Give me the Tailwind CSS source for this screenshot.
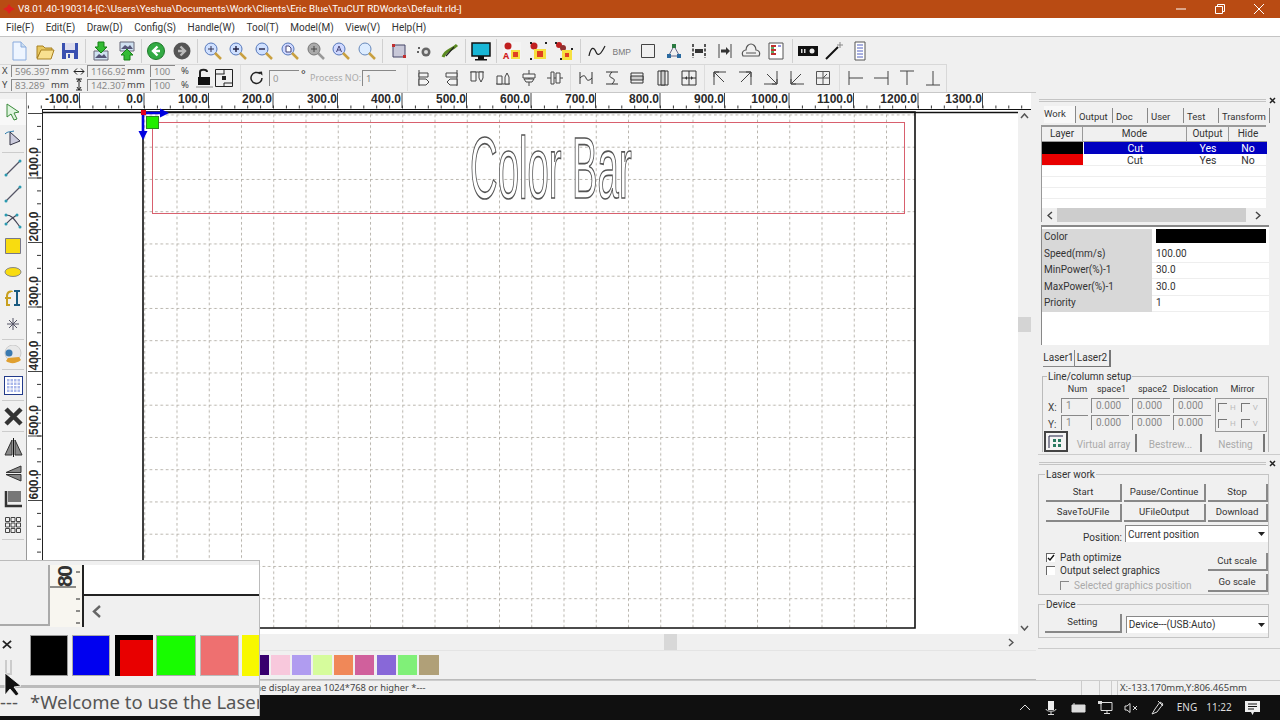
<!DOCTYPE html>
<html>
<head>
<meta charset="utf-8">
<script src="https://cdn.jsdelivr.net/npm/@tailwindcss/browser@4"></script>
</head>
<body class="m-0">
<div class="relative w-[1280px] h-[720px] overflow-hidden flex flex-col bg-[#f0f0f0] text-[#222] font-['Noto_Sans',sans-serif]">

<!-- title bar -->
<div class="h-[18px] shrink-0 bg-[#b94b13] flex items-center text-white text-[9.8px] font-['Roboto',sans-serif]">
  <svg class="w-[12px] h-[12px] ml-[3px] mr-[3px]" viewBox="0 0 12 12"><path d="M6 1 L8 4 L12 6 L8 8 L6 11 L4 8 L0 6 L4 4Z" fill="#e02020"/></svg>
  <span class="whitespace-nowrap pt-[1px]">V8.01.40-190314-[C:\Users\Yeshua\Documents\Work\Clients\Eric Blue\TruCUT RDWorks\Default.rld-]</span>
  <div class="ml-auto flex pr-[2px]">
    <div class="w-[39px] flex justify-center"><svg class="w-[10px] h-[10px]" viewBox="0 0 10 10"><path d="M0 5h10" stroke="#fff"/></svg></div>
    <div class="w-[39px] flex justify-center"><svg class="w-[10px] h-[10px]" viewBox="0 0 10 10"><path d="M.5 2.500h7v7h-7zM2.500 2.500v-2h7v7h-2" fill="none" stroke="#fff"/></svg></div>
    <div class="w-[39px] flex justify-center"><svg class="w-[10px] h-[10px]" viewBox="0 0 10 10"><path d="M0 0l10 10M10 0L0 10" stroke="#fff"/></svg></div>
  </div>
</div>

<!-- menu -->
<div class="h-[19px] shrink-0 bg-white flex items-center pl-[6px] pt-[1px] gap-[11.5px] text-[10px] text-[#333] border-b border-[#c4c4c4] font-['Roboto',sans-serif]">
  <span>File(F)</span><span>Edit(E)</span><span>Draw(D)</span><span>Config(S)</span><span>Handle(W)</span><span>Tool(T)</span><span>Model(M)</span><span>View(V)</span><span>Help(H)</span>
</div>

<!-- toolbar row 1 -->
<div class="h-[27px] shrink-0 flex items-center pl-[9px]">
  <div class="flex gap-[5.7px]">
    <svg class="w-[20px] h-[20px]" viewBox="0 0 20 20"><path d="M4 1h8l5 5v13H4z" fill="#eef5ff" stroke="#88aadd"/><path d="M12 1v5h5" fill="#cde" stroke="#88aadd"/></svg>
    <svg class="w-[20px] h-[20px]" viewBox="0 0 20 20"><path d="M2 5h6l2 2h7v3H6L2 17z" fill="#e8c860" stroke="#a88020"/><path d="M6 9h13l-3 9H2z" fill="#f8e090" stroke="#a88020"/></svg>
    <svg class="w-[20px] h-[20px]" viewBox="0 0 20 20"><path d="M2 2h16v16H2z" fill="#3a50b0"/><path d="M5 2h10v7H5z" fill="#dde"/><path d="M6 12h8v6H6z" fill="#eee"/><path d="M8 13h2v4H8z" fill="#3a50b0"/></svg>
  </div>
  <i class="w-px h-[24px] bg-[#d0d0d0] mx-[5px]"></i>
  <div class="flex gap-[5.7px]">
    <svg class="w-[20px] h-[20px]" viewBox="0 0 20 20"><path d="M3 10h14v9H3z" fill="#cfe0f0" stroke="#667"/><path d="M4 17l4-4 3 2 2-2 3 4z" fill="#557"/><path d="M7 1h6v5h3l-6 6-6-6h3z" fill="#33bb33" stroke="#178017"/></svg>
    <svg class="w-[20px] h-[20px]" viewBox="0 0 20 20"><path d="M3 1h14v9H3z" fill="#cfe0f0" stroke="#667"/><path d="M4 8l4-4 3 2 2-2 3 4z" fill="#557"/><path d="M7 19v-5H4l6-6 6 6h-3v5z" fill="#33bb33" stroke="#178017"/></svg>
  </div>
  <i class="w-px h-[24px] bg-[#d0d0d0] mx-[4px]"></i>
  <div class="flex gap-[5.7px]">
    <svg class="w-[20px] h-[20px]" viewBox="0 0 20 20"><circle cx="10" cy="10" r="8.5" fill="#33aa44" stroke="#1f7a2a"/><path d="M11.500 5.500L7 10l4.500 4.500M7 10h7" fill="none" stroke="#fff" stroke-width="2.400"/></svg>
    <svg class="w-[20px] h-[20px]" viewBox="0 0 20 20"><circle cx="10" cy="10" r="8.500" fill="#555"/><path d="M8.500 5.500L13 10l-4.500 4.500M13 10H6" fill="none" stroke="#bbb" stroke-width="2.400"/></svg>
  </div>
  <i class="w-px h-[24px] bg-[#d0d0d0] mx-[5px]"></i>
  <div class="flex gap-[5.7px]">
    <svg class="w-[20px] h-[20px]" viewBox="0 0 20 20"><circle cx="8" cy="8" r="6" fill="#cfe0ff" stroke="#5577bb"/><path d="M8 5v6M5 8h6" stroke="#335"/><path d="M12 12l6 6" stroke="#c9a040" stroke-width="2.500"/></svg>
    <svg class="w-[20px] h-[20px]" viewBox="0 0 20 20"><circle cx="8" cy="8" r="6" fill="#cfe0ff" stroke="#5577bb"/><path d="M8 5v6M5 8h6" stroke="#224" stroke-width="1.400"/><path d="M12 12l6 6" stroke="#c9a040" stroke-width="2.500"/></svg>
    <svg class="w-[20px] h-[20px]" viewBox="0 0 20 20"><circle cx="8" cy="8" r="6" fill="#cfe0ff" stroke="#5577bb"/><path d="M5 8h6" stroke="#224" stroke-width="1.400"/><path d="M12 12l6 6" stroke="#c9a040" stroke-width="2.500"/></svg>
    <svg class="w-[20px] h-[20px]" viewBox="0 0 20 20"><circle cx="8" cy="8" r="6" fill="#cfd8ff" stroke="#5577bb"/><path d="M6 5h3l2 2v4H6z" fill="#fff" stroke="#447"/><path d="M12 12l6 6" stroke="#c9a040" stroke-width="2.500"/></svg>
    <svg class="w-[20px] h-[20px]" viewBox="0 0 20 20"><circle cx="8" cy="8" r="6" fill="#aaa" stroke="#777"/><path d="M8 5v6M5 8h6" stroke="#444"/><path d="M12 12l6 6" stroke="#999" stroke-width="2.500"/></svg>
    <svg class="w-[20px] h-[20px]" viewBox="0 0 20 20"><circle cx="8" cy="8" r="6" fill="#cfd8ff" stroke="#5577bb"/><path d="M5.500 11L8 5l2.500 6M6.500 9h3" fill="none" stroke="#447"/><path d="M12 12l6 6" stroke="#c9a040" stroke-width="2.500"/></svg>
    <svg class="w-[20px] h-[20px]" viewBox="0 0 20 20"><circle cx="8" cy="8" r="6" fill="#dcecff" stroke="#6688bb"/><path d="M12 12l6 6" stroke="#c9a040" stroke-width="2.500"/></svg>
  </div>
  <i class="w-px h-[24px] bg-[#d0d0d0] mx-[5.500px]"></i>
  <div class="flex gap-[5.7px]">
    <svg class="w-[20px] h-[20px]" viewBox="0 0 20 20"><path d="M4 4h12v12H4z" fill="#c8c8d8" stroke="#446"/><path d="M3 3h3v3H3zM14 14h3v3h-3z" fill="#c03030"/></svg>
    <svg class="w-[20px] h-[20px]" viewBox="0 0 20 20"><circle cx="11" cy="11" r="4.500" fill="#666"/><circle cx="11" cy="11" r="2" fill="#ddd"/><path d="M3 7h2M2 11h2" stroke="#333" stroke-width="1.500"/></svg>
    <svg class="w-[20px] h-[20px]" viewBox="0 0 20 20"><path d="M3 16C6 8 11 10 17 4" fill="none" stroke="#5a8a20" stroke-width="3"/><path d="M6 15l8-9" stroke="#222" stroke-width="1.200"/></svg>
  </div>
  <i class="w-px h-[24px] bg-[#d0d0d0] mx-[5px]"></i>
  <svg class="w-[20px] h-[20px]" viewBox="0 0 20 20"><path d="M1 2h18v13H1z" fill="#18b6d6" stroke="#111" stroke-width="1.500"/><path d="M7 15h6v3h3v1.500H4V18h3z" fill="#111"/></svg>
  <i class="w-px h-[24px] bg-[#d0d0d0] mx-[5px]"></i>
  <div class="flex gap-[5.7px]">
    <svg class="w-[20px] h-[20px]" viewBox="0 0 20 20"><rect x="1" y="1" width="18" height="18" fill="#f4f4f4"/><circle cx="6" cy="5" r="3.500" fill="#c02020"/><path d="M9 9h9v9H9z" fill="#f6e040"/><path d="M11 11h5v5h-5z" fill="#e04020"/><text x="1" y="18" font-size="9" fill="#d02020" font-weight="700">A</text></svg>
    <svg class="w-[20px] h-[20px]" viewBox="0 0 20 20"><circle cx="6" cy="5" r="3.500" fill="#c02020"/><path d="M6 8h12v10H6z" fill="#f6e040"/><path d="M9 10h6v6H9z" fill="#e04020"/><path d="M2 1h2v2H2zM17 1h2v2h-2zM2 17h2v2H2z" fill="#222"/></svg>
    <svg class="w-[20px] h-[20px]" viewBox="0 0 20 20"><circle cx="5" cy="4" r="3" fill="#c02020"/><circle cx="9" cy="7" r="3" fill="#903030"/><path d="M8 9h10v10H8z" fill="#f6e040"/><path d="M11 12h4v4h-4z" fill="#e04020"/><path d="M1 1h2v2H1zM17 7h2v2h-2zM6 17h2v2H6z" fill="#222"/></svg>
  </div>
  <i class="w-px h-[24px] bg-[#d0d0d0] mx-[6px]"></i>
  <div class="flex gap-[5.7px]">
    <svg class="w-[20px] h-[20px]" viewBox="0 0 20 20"><path d="M2 15C4 5 7 6 9 11s5 2 9-6" fill="none" stroke="#222" stroke-width="1.200"/></svg>
    <svg class="w-[20px] h-[20px]" viewBox="0 0 20 20"><text x="0.500" y="14" font-size="8.500" fill="#777" font-family="Liberation Sans">BMP</text></svg>
    <svg class="w-[20px] h-[20px]" viewBox="0 0 20 20"><path d="M3.500 3.500h13v13h-13z" fill="none" stroke="#444"/></svg>
    <svg class="w-[20px] h-[20px]" viewBox="0 0 20 20"><path d="M10 5L5 14M10 5l5 9M5 15h10" stroke="#668" fill="none"/><path d="M8 3h4v4H8z" fill="#2a7a40"/><path d="M3 13h4v4H3zM13 13h4v4h-4z" fill="#2a6aa0"/></svg>
    <svg class="w-[20px] h-[20px]" viewBox="0 0 20 20"><path d="M4 3v14M16 3v14" stroke="#222" stroke-width="1.500" stroke-dasharray="3 1.500"/><path d="M6 8h8v4H6z" fill="#333"/></svg>
    <svg class="w-[20px] h-[20px]" viewBox="0 0 20 20"><path d="M4 3v14M16 3v14" stroke="#444"/><path d="M6 10h6" stroke="#333" stroke-width="3"/><path d="M11 6l4 4-4 4z" fill="#333"/></svg>
    <svg class="w-[20px] h-[20px]" viewBox="0 0 20 20"><path d="M2 15c-2-4 1-6 3-6 0-4 3-6 5-6s5 2 5 6c2 0 5 2 3 6zM5 12h10" fill="none" stroke="#555" stroke-width="1.200"/></svg>
    <svg class="w-[20px] h-[20px]" viewBox="0 0 20 20"><path d="M3 2h14v16H3z" fill="#fff" stroke="#555"/><path d="M5 5h5M5 9h5M5 13h5" stroke="#c03030" stroke-width="2"/><path d="M5 7h3M5 11h3" stroke="#2a8a30" stroke-width="1.500"/><path d="M12 5h3" stroke="#3030c0"/></svg>
  </div>
  <i class="w-px h-[24px] bg-[#d0d0d0] mx-[5.500px]"></i>
  <div class="flex gap-[5.7px]">
    <svg class="w-[20px] h-[20px]" viewBox="0 0 20 20"><path d="M0 5h20v10H0z" fill="#111"/><path d="M3 8h1.500v4H3zM6 8h1.500v4H6z" fill="#ddd"/><circle cx="14" cy="10" r="2.500" fill="#eee"/></svg>
    <svg class="w-[20px] h-[20px]" viewBox="0 0 20 20"><path d="M2 18L14 6" stroke="#111" stroke-width="2"/><path d="M16 1v6M13 4h6" stroke="#888"/></svg>
    <svg class="w-[20px] h-[20px]" viewBox="0 0 20 20"><path d="M5 1h10v18H5z" fill="#fff" stroke="#555"/><path d="M7 4h6M7 7h6M7 10h6M7 13h6M7 16h6" stroke="#5060c0"/></svg>
  </div>
</div>

<!-- toolbar row 2 -->
<div class="h-[28px] shrink-0 flex text-[9.5px]">
  <div class="w-[946px] shrink-0 border-t border-[#d8d8d8] bg-[#f0f0f0] flex items-center pb-[2px]">
    <div class="w-[11px] pl-[2px] flex flex-col gap-[3px] leading-[11px] text-[#444]"><span>X</span><span>Y</span></div>
    <div class="w-[62px] flex flex-col gap-[2px]">
      <div class="flex items-center"><span class="w-[38px] h-[12px] border-t border-l border-[#888] bg-[#efefef] text-[#888] pl-[3px] leading-[11px] overflow-hidden whitespace-nowrap">596.397</span><span class="ml-[2px] text-[#444] leading-[11px]">mm</span></div>
      <div class="flex items-center"><span class="w-[38px] h-[12px] border-t border-l border-[#888] bg-[#efefef] text-[#888] pl-[3px] leading-[11px] overflow-hidden whitespace-nowrap">83.289</span><span class="ml-[2px] text-[#444] leading-[11px]">mm</span></div>
    </div>
    <div class="w-[14px] flex flex-col">
      <svg class="w-[12px] h-[13px]" viewBox="0 0 12 13"><path d="M1 6.500h10M1 6.500l3-3M1 6.500l3 3M11 6.500l-3-3M11 6.500l-3 3" fill="none" stroke="#222"/></svg>
      <svg class="w-[12px] h-[13px]" viewBox="0 0 12 13"><path d="M6 1v11M3 1h6M3 12h6M6 1L4 4M6 1l2 3M6 12l-2-3M6 12l2-3" fill="none" stroke="#222"/></svg>
    </div>
    <div class="w-[63px] flex flex-col gap-[2px]">
      <div class="flex items-center"><span class="w-[38px] h-[12px] border-t border-l border-[#888] bg-[#efefef] text-[#888] pl-[3px] leading-[11px] overflow-hidden whitespace-nowrap">1166.92</span><span class="ml-[2px] text-[#444] leading-[11px]">mm</span></div>
      <div class="flex items-center"><span class="w-[38px] h-[12px] border-t border-l border-[#888] bg-[#efefef] text-[#888] pl-[3px] leading-[11px] overflow-hidden whitespace-nowrap">142.307</span><span class="ml-[2px] text-[#444] leading-[11px]">mm</span></div>
    </div>
    <div class="w-[46px] flex flex-col gap-[2px]">
      <div class="flex items-center"><span class="w-[25px] h-[12px] border-t border-l border-[#888] text-[#888] pl-[3px] leading-[11px]">100</span><span class="ml-[6px] text-[#444] leading-[11px]">%</span></div>
      <div class="flex items-center"><span class="w-[25px] h-[12px] border-t border-l border-[#888] text-[#888] pl-[3px] leading-[11px]">100</span><span class="ml-[6px] text-[#444] leading-[11px]">%</span></div>
    </div>
    <div class="flex gap-[2px] items-center">
      <svg class="w-[17px] h-[20px]" viewBox="0 0 17 20"><path d="M4 9V4c0-3 7-3 7 0" fill="none" stroke="#222" stroke-width="2"/><path d="M2 9h12v8H2z" fill="#111"/><path d="M0 19h17" stroke="#888"/></svg>
      <svg class="w-[18px] h-[18px]" viewBox="0 0 18 18"><path d="M.5.500h17v17H.5zM.5 5h9M9 .500V5M9 18v-4h8" fill="none" stroke="#222"/><path d="M7 7h4v4H7z" fill="#222"/></svg>
    </div>
    <i class="w-px h-[26px] bg-[#ddd] ml-[7px] mr-[8px]"></i>
    <svg class="w-[16px] h-[16px]" viewBox="0 0 16 16"><path d="M13 8a5.500 5.500 0 1 1-2-4.300" fill="none" stroke="#222" stroke-width="1.500"/><path d="M9 2l4-.500.500 4z" fill="#222"/></svg>
    <span class="w-[30px] h-[16px] ml-[4px] border-t border-l border-[#888] text-[#999] pl-[3px] leading-[15px]">0</span>
    <span class="ml-[2px] w-[9px] text-[#333] text-[11px] -mt-[6px]">°</span>
    <span class="w-[52px] text-[#aaa] text-[9px] whitespace-nowrap">Process NO:</span>
    <span class="w-[34px] h-[16px] border-t border-l border-[#888] text-[#888] pl-[3px] leading-[15px]">1</span>
    <i class="w-px h-[26px] bg-[#ddd] ml-[11px] mr-[7px]"></i>
    <div class="flex gap-[6px]">
      <svg class="w-[20px] h-[20px]" viewBox="0 0 20 20"><path d="M4 2v16" stroke="#444"/><path d="M4 5h9v4H4zM4 11h7l3 3-3 3H4z" fill="#f4f4f4" stroke="#444"/></svg>
      <svg class="w-[20px] h-[20px]" viewBox="0 0 20 20"><path d="M16 2v16" stroke="#444"/><path d="M5 5h11v4H5zM9 11h7v6H9l-3-3z" fill="#f4f4f4" stroke="#444"/></svg>
      <svg class="w-[20px] h-[20px]" viewBox="0 0 20 20"><path d="M3 4h14" stroke="#444"/><path d="M4 4h5v9H4zM12 4h4v6l-2 4-2-4z" fill="#f4f4f4" stroke="#444"/></svg>
      <svg class="w-[20px] h-[20px]" viewBox="0 0 20 20"><path d="M3 16h14" stroke="#444"/><path d="M4 8h5v8H4zM12 16V9l2-4 2 4v7z" fill="#f4f4f4" stroke="#444"/></svg>
      <svg class="w-[20px] h-[20px]" viewBox="0 0 20 20"><path d="M10 2v16" stroke="#444"/><path d="M4 6h12v4H4zM5 11h10l-2 3h-6z" fill="#f4f4f4" stroke="#444"/></svg>
      <svg class="w-[20px] h-[20px]" viewBox="0 0 20 20"><path d="M2 10h16" stroke="#444"/><path d="M6 4h3v12H6zM11 5h4v10h-4z" fill="#f4f4f4" stroke="#444"/></svg>
    </div>
    <i class="w-px h-[26px] bg-[#ddd] mx-[5px]"></i>
    <div class="flex gap-[5.700px]">
      <svg class="w-[20px] h-[20px]" viewBox="0 0 20 20"><path d="M4 4v12M16 4v12M4 10c3-3 5-3 6 0s3 3 6 0" fill="none" stroke="#333"/></svg>
      <svg class="w-[20px] h-[20px]" viewBox="0 0 20 20"><path d="M4 4h12M4 16h12M10 4c-3 3-3 5 0 6s3 3 0 6" fill="none" stroke="#333"/></svg>
      <svg class="w-[20px] h-[20px]" viewBox="0 0 20 20"><path d="M4 5h12v10H4z" fill="none" stroke="#333"/><path d="M4 8h12v4H4z" fill="#ccc" stroke="#333"/></svg>
      <svg class="w-[20px] h-[20px]" viewBox="0 0 20 20"><path d="M5 3h10v14H5z" fill="none" stroke="#333"/><path d="M8 3h4v14H8z" fill="#ccc" stroke="#333"/></svg>
      <svg class="w-[20px] h-[20px]" viewBox="0 0 20 20"><path d="M3 3h14v14H3zM3 10h14M10 3v14" fill="none" stroke="#333"/><path d="M6 10l2-2v4zM14 10l-2-2v4z" fill="#333"/></svg>
    </div>
    <i class="w-px h-[26px] bg-[#ddd] mx-[5px]"></i>
    <div class="flex gap-[5.700px]">
      <svg class="w-[20px] h-[20px]" viewBox="0 0 20 20"><path d="M4 17V4h12M4 4l10 10M4 4h5M4 4v5" fill="none" stroke="#444"/></svg>
      <svg class="w-[20px] h-[20px]" viewBox="0 0 20 20"><path d="M4 4h12v13M16 4L6 14M16 4h-5M16 4v5" fill="none" stroke="#444"/></svg>
      <svg class="w-[20px] h-[20px]" viewBox="0 0 20 20"><path d="M16 3v13H3M16 16L6 6M16 16h-5M16 16v-5" fill="none" stroke="#444"/></svg>
      <svg class="w-[20px] h-[20px]" viewBox="0 0 20 20"><path d="M4 3v13h13M4 16L14 6M4 16h5M4 16v-5" fill="none" stroke="#444"/></svg>
      <svg class="w-[20px] h-[20px]" viewBox="0 0 20 20"><path d="M3.500 3.500h13v13h-13zM3.500 10h13M10 3.500v13M14 6l-4 4" fill="none" stroke="#555"/></svg>
    </div>
    <i class="w-px h-[26px] bg-[#ddd] mx-[6px]"></i>
    <div class="flex gap-[5.700px]">
      <svg class="w-[20px] h-[20px]" viewBox="0 0 20 20"><path d="M3 3v14M3 10h14" fill="none" stroke="#444"/></svg>
      <svg class="w-[20px] h-[20px]" viewBox="0 0 20 20"><path d="M17 3v14M3 10h14" fill="none" stroke="#444"/></svg>
      <svg class="w-[20px] h-[20px]" viewBox="0 0 20 20"><path d="M3 3h14M10 3v14" fill="none" stroke="#444"/></svg>
      <svg class="w-[20px] h-[20px]" viewBox="0 0 20 20"><path d="M3 17h14M10 3v14" fill="none" stroke="#444"/></svg>
    </div>
  </div>
  <div class="flex-1 border-l border-[#d8d8d8]"></div>
</div>

<!-- middle -->
<div class="flex-1 min-h-0 flex">
  <div class="w-[1036px] shrink-0 flex flex-col">
    <!-- top ruler -->
    <div class="h-[18px] shrink-0 flex border-t border-[#c8c8c8]">
      <div class="w-[27px] shrink-0"></div>
      <svg class="w-[1004px] h-[17px] bg-white" viewBox="0 0 1004 17" font-size="12" font-weight="700" fill="#2a2a2a" font-family="Liberation Sans">
        <defs><pattern id="tk" patternUnits="userSpaceOnUse" x="0.900" y="0" width="12.900" height="17"><path d="M.5 12.500v3" stroke="#333"/></pattern></defs>
        <rect width="1004" height="17" fill="url(#tk)"/>
        <path d="M52.500 0v15M117 0v15M181.500 0v15M246 0v15M310.500 0v15M375 0v15M439.500 0v15M504 0v15M568.500 0v15M633 0v15M697.500 0v15M762 0v15M826.500 0v15M891 0v15M955.500 0v15" stroke="#444"/>
        <path d="M15 16.500h989" stroke="#111"/>
        <g text-anchor="end">
          <text x="52" y="10">-100.0</text><text x="116" y="10">0.0</text><text x="181" y="10">100.0</text><text x="245" y="10">200.0</text><text x="310" y="10">300.0</text><text x="374" y="10">400.0</text><text x="439" y="10">500.0</text><text x="503" y="10">600.0</text><text x="568" y="10">700.0</text><text x="632" y="10">800.0</text><text x="697" y="10">900.0</text><text x="761" y="10">1000.0</text><text x="826" y="10">1100.0</text><text x="890" y="10">1200.0</text><text x="955" y="10">1300.0</text>
        </g>
      </svg>
      <div class="w-[5px] shrink-0"></div>
    </div>
    <!-- work row -->
    <div class="flex-1 min-h-0 flex">
      <!-- left tools -->
      <div class="w-[27px] shrink-0 -mt-[18px] pt-[7px] flex flex-col items-stretch border-r border-[#999] h-[470px]">
        <div class="h-[26px] bg-[#f8f8f8] flex items-center justify-center"><svg class="w-[18px] h-[18px]" viewBox="0 0 18 18"><path d="M3 1l12 8-5 1 3 6-3 1-3-6-4 3z" fill="#dff5df" stroke="#3a8a3a"/></svg></div>
        <div class="h-[26px] flex items-center justify-center"><svg class="w-[18px] h-[18px]" viewBox="0 0 18 18"><path d="M6 3l10 9-10 4z" fill="#ccd" stroke="#334"/><path d="M1 5c3-3 6-2 9-3" fill="none" stroke="#27a"/></svg></div>
        <i class="h-px bg-[#ccc] mx-[2px] mt-[1px] mb-[2px]"></i>
        <div class="h-[26px] flex items-center justify-center"><svg class="w-[18px] h-[18px]" viewBox="0 0 18 18"><path d="M2 16L16 2" stroke="#556" stroke-width="1.200"/><circle cx="2" cy="16" r="1.500" fill="#2a9ab0"/><circle cx="16" cy="2" r="1.500" fill="#2a9ab0"/></svg></div>
        <div class="h-[26px] flex items-center justify-center"><svg class="w-[18px] h-[18px]" viewBox="0 0 18 18"><path d="M2 16L16 2" stroke="#556" stroke-width="1.200"/><circle cx="2" cy="16" r="1.500" fill="#2a9ab0"/><circle cx="16" cy="2" r="1.500" fill="#2a9ab0"/></svg></div>
        <div class="h-[26px] flex items-center justify-center"><svg class="w-[18px] h-[18px]" viewBox="0 0 18 18"><path d="M2 4c6 0 8 4 14 12M2 13C6 8 10 6 13 4" fill="none" stroke="#445" stroke-width="1.200"/><circle cx="2" cy="4" r="1.500" fill="#2a9ab0"/><circle cx="16" cy="16" r="1.500" fill="#2a9ab0"/><circle cx="2" cy="13" r="1.500" fill="#2a9ab0"/><circle cx="13" cy="4" r="1.500" fill="#2a9ab0"/></svg></div>
        <div class="h-[26px] flex items-center justify-center"><svg class="w-[18px] h-[18px]" viewBox="0 0 18 18"><path d="M1.500 1.500h15v15h-15z" fill="#f8dc10" stroke="#778"/></svg></div>
        <div class="h-[26px] flex items-center justify-center"><svg class="w-[18px] h-[18px]" viewBox="0 0 18 18"><ellipse cx="9" cy="9" rx="8" ry="4.500" fill="#f8dc10" stroke="#888"/></svg></div>
        <div class="h-[26px] flex items-center justify-center"><svg class="w-[18px] h-[18px]" viewBox="0 0 18 18"><path d="M3 16V7c0-5 5-5 5-4M1 9h6M2 16h4" fill="none" stroke="#c8a020" stroke-width="2"/><path d="M13 2v14M10 2h6M10 16h6" fill="none" stroke="#1a5a80" stroke-width="2"/></svg></div>
        <div class="h-[26px] flex items-center justify-center"><svg class="w-[18px] h-[18px]" viewBox="0 0 18 18"><path d="M9 3v12M3 9h12M5 5l8 8M13 5l-8 8" stroke="#556"/></svg></div>
        <i class="h-px bg-[#ccc] mx-[2px] mb-[2px] mt-[2px]"></i>
        <div class="h-[26px] flex items-center justify-center"><svg class="w-[20px] h-[20px]" viewBox="0 0 20 20"><circle cx="10" cy="8" r="8" fill="#e8e8e8" stroke="#ccc"/><path d="M3 16c4 3 10 3 15-1l-2-3-11 1z" fill="#e0a030"/><circle cx="6" cy="8" r="3.500" fill="#3a7ab0"/></svg></div>
        <i class="h-px bg-[#ccc] mx-[2px] mt-[1px] mb-[2px]"></i>
        <div class="h-[26px] flex items-center justify-center"><svg class="w-[19px] h-[19px]" viewBox="0 0 19 19"><rect x=".5" y=".5" width="18" height="18" fill="#fff" stroke="#223a8a"/><path d="M3 3h13v13H3z" fill="#aab8ea"/><path d="M6 3v13M9.500 3v13M13 3v13M3 6h13M3 9.500h13M3 13h13" stroke="#fff"/></svg></div>
        <i class="h-px bg-[#ccc] mx-[2px] my-[2px]"></i>
        <div class="h-[26px] flex items-center justify-center"><svg class="w-[19px] h-[19px]" viewBox="0 0 19 19"><path d="M2 2l15 15M17 2L2 17" stroke="#333" stroke-width="4.500"/></svg></div>
        <i class="h-px bg-[#ccc] mx-[2px] my-[2px]"></i>
        <div class="h-[26px] flex items-center justify-center"><svg class="w-[19px] h-[19px]" viewBox="0 0 19 19"><path d="M8 2v15H1zM11 2v15h7z" fill="#888" stroke="#333"/><path d="M9.500 0v19" stroke="#111"/></svg></div>
        <div class="h-[26px] flex items-center justify-center"><svg class="w-[19px] h-[19px]" viewBox="0 0 19 19"><path d="M17 8.500H2L17 2zM17 10.500H2L17 17z" fill="#888" stroke="#333"/></svg></div>
        <div class="h-[26px] flex items-center justify-center"><svg class="w-[19px] h-[19px]" viewBox="0 0 19 19"><path d="M4 1h13v11H4z" fill="#777"/><path d="M2 1v15h16" fill="none" stroke="#333" stroke-width="2.500"/></svg></div>
        <div class="h-[26px] flex items-center justify-center"><svg class="w-[18px] h-[18px]" viewBox="0 0 18 18" fill="none" stroke="#444"><path d="M1.500 1.500h4v4h-4zM7 1.500h4v4H7zM12.500 1.500h4v4h-4zM1.500 7h4v4h-4zM7 7h4v4H7zM12.500 7h4v4h-4zM1.500 12.500h4v4h-4zM7 12.500h4v4H7zM12.500 12.500h4v4h-4z"/></svg></div>
        <i class="h-px bg-[#ccc] mx-[2px] mt-[1px]"></i>
      </div>
      <!-- vertical ruler -->
      <svg class="w-[15px] h-[524px] shrink-0 bg-white" viewBox="0 0 15 524" font-size="12" font-weight="700" fill="#2a2a2a" font-family="Liberation Sans">
        <defs><pattern id="tv" patternUnits="userSpaceOnUse" x="0" y="3" width="15" height="12.900"><path d="M10 .5h4" stroke="#333"/></pattern></defs>
        <rect width="15" height="524" fill="url(#tv)"/>
        <path d="M1 3.500h14M1 68h14M1 132.500h14M1 197h14M1 261.500h14M1 326h14M1 390.500h14M1 455h14" stroke="#444"/>
        <text transform="translate(11,67) rotate(-90)">100.0</text><text transform="translate(11,131.500) rotate(-90)">200.0</text><text transform="translate(11,196) rotate(-90)">300.0</text><text transform="translate(11,260.500) rotate(-90)">400.0</text><text transform="translate(11,325) rotate(-90)">500.0</text><text transform="translate(11,389.500) rotate(-90)">600.0</text>
      </svg>
      <div class="w-px h-full bg-[#222] shrink-0"></div>
      <!-- canvas -->
      <svg class="w-[975px] h-[524px] shrink-0 bg-white overflow-visible" viewBox="0 0 975 524" font-family="Liberation Sans">
        <defs>
          <pattern id="gr" patternUnits="userSpaceOnUse" x="101.250" y="4.450" width="32.250" height="32.250"><path d="M.5 0v32.250M0 .5h32.250" stroke="#b8b4ac" stroke-dasharray="2.700 2.675" fill="none"/></pattern>
        </defs>
        <rect x="100" y="2" width="772" height="516" fill="url(#gr)"/>
        <path d="M0 2.500h975" stroke="#111" stroke-width="1.500"/>
        <path d="M100 2h772v516H100z" fill="none" stroke="#111" stroke-width="1.600"/>
        <rect x="109.500" y="12.500" width="752" height="91" fill="none" stroke="#d8606e"/>
        <text transform="translate(427,88) scale(.435,1)" font-size="88" fill="#fff" stroke="#555" stroke-width="1.700">Color Bar</text>
        <rect x="103.500" y="6.500" width="12" height="12" fill="#22ee00" stroke="#2a8a20"/>
        <path d="M100 3v22M100 3h20" stroke="#0000e0" stroke-width="2.600"/>
        <path d="M126 3l-9-4.500v9zM100 30l-4.500-9h9z" fill="#0000e0"/>
        <rect x="98" y="0" width="5" height="5" fill="#e00020"/>
      </svg>
      <!-- vertical scrollbar -->
      <div class="w-[13px] shrink-0 h-[524px] bg-[#f0f0f0] flex flex-col items-center">
        <svg class="w-[9px] h-[6px] mt-[3px]" viewBox="0 0 9 6"><path d="M1 5l3.500-4L8 5" fill="none" stroke="#555" stroke-width="1.500"/></svg>
        <div class="w-full h-[15px] mt-[198px] bg-[#d4d4d4]"></div>
        <svg class="w-[9px] h-[6px] mt-auto mb-[3px]" viewBox="0 0 9 6"><path d="M1 1l3.500 4L8 1" fill="none" stroke="#555" stroke-width="1.500"/></svg>
      </div>
    </div>
    <!-- horizontal scrollbar -->
    <div class="h-[17px] shrink-0 flex items-center pl-[664px] pr-[22px] border-b border-[#e4e4e4]">
      <div class="w-[13px] h-full bg-[#d8d8d8]"></div>
      <svg class="w-[6px] h-[9px] ml-auto" viewBox="0 0 6 9"><path d="M1 1l4 3.500L1 8" fill="none" stroke="#555" stroke-width="1.500"/></svg>
    </div>
    <!-- colour bar -->
    <div class="h-[29px] shrink-0 flex items-start pt-[4px] pl-[260px] gap-[2.100px] border-b border-[#bbb]">
      <i class="w-[9px] h-[20px] bg-[#38006e]"></i><i class="w-[19px] h-[20px] bg-[#f8c8dc]"></i><i class="w-[19px] h-[20px] bg-[#b09cf0]"></i><i class="w-[19px] h-[20px] bg-[#d6fc9c]"></i><i class="w-[19px] h-[20px] bg-[#f08858]"></i><i class="w-[19px] h-[20px] bg-[#d0609c]"></i><i class="w-[19px] h-[20px] bg-[#8868d8]"></i><i class="w-[19px] h-[20px] bg-[#80f078]"></i><i class="w-[20px] h-[20px] bg-[#b0a078]"></i>
    </div>
  </div>

  <!-- right panel -->
  <div class="flex-1 min-w-0 text-[10px] leading-[11px] text-[#333] pt-[5px] pl-[2px] font-['Roboto',sans-serif]">
    <div class="flex items-center h-[6px] pr-[4px] pl-[1px]">
      <div class="flex-1 h-[3px] border-y border-[#c4c4c4]"></div>
      <svg class="w-[7px] h-[7px] ml-[3px]" viewBox="0 0 7 7"><path d="M1 1l5 5M6 1L1 6" stroke="#222" stroke-width="1.500"/></svg>
    </div>
    <!-- tabs -->
    <div class="flex items-end h-[17px] mt-[3px] pl-[6px] text-[9.500px]">
      <span class="w-[32px] h-[17px] bg-[#f8f8f8] border-r border-[#888] leading-[16px]">Work</span>
      <span class="w-[37px] h-[15px] border-r border-[#888] pl-[3px] leading-[17px]">Output</span>
      <span class="w-[35px] h-[15px] border-r border-[#888] pl-[3px] leading-[17px]">Doc</span>
      <span class="w-[36px] h-[15px] border-r border-[#888] pl-[3px] leading-[17px]">User</span>
      <span class="w-[35px] h-[15px] border-r border-[#888] pl-[3px] leading-[17px]">Test</span>
      <span class="w-[51px] h-[15px] border-r border-[#888] pl-[3px] leading-[17px] whitespace-nowrap">Transform</span>
    </div>
    <!-- layer table -->
    <div class="w-[225px] ml-[3px] mt-[2px] border-t-2 border-l border-[#999] bg-white">
      <div class="grid grid-cols-[41px_104px_42px_38px] h-[15px] bg-[#f0f0f0] text-center leading-[14px] text-[10px]">
        <span class="border-r border-[#999] border-b">Layer</span><span class="border-r border-[#999] border-b">Mode</span><span class="border-r border-[#999] border-b">Output</span><span class="border-b border-[#999]">Hide</span>
      </div>
      <div class="grid grid-cols-[41px_104px_42px_38px] h-[12px] text-center text-[10.500px] leading-[14px] text-white">
        <span class="bg-black"></span><span class="bg-[#0000c0] ml-[1px] h-[12px]">Cut</span><span class="bg-[#0000c0] h-[12px]">Yes</span><span class="bg-[#0000c0] h-[12px]">No</span>
      </div>
      <div class="grid grid-cols-[41px_104px_42px_38px] h-[12px] text-center text-[10.500px] leading-[14px] border-b border-[#eee]">
        <span class="bg-[#e80000]"></span><span class="h-[11px]">Cut</span><span class="h-[11px]">Yes</span><span class="h-[11px]">No</span>
      </div>
      <div class="h-[11px] border-b border-[#eee]"></div>
      <div class="h-[11px] border-b border-[#eee]"></div>
      <div class="h-[11px] border-b border-[#eee]"></div>
      <div class="h-[9px]"></div>
      <div class="h-[14px] bg-[#f0f0f0] flex items-center px-[5px]">
        <svg class="w-[6px] h-[9px]" viewBox="0 0 6 9"><path d="M5 1L1 4.500 5 8" fill="none" stroke="#444" stroke-width="1.500"/></svg>
        <div class="w-[191px] h-full bg-[#cdcdcd] ml-[4px]"></div>
        <svg class="w-[6px] h-[9px] ml-[9px]" viewBox="0 0 6 9"><path d="M1 1l4 3.500L1 8" fill="none" stroke="#444" stroke-width="1.500"/></svg>
      </div>
    </div>
    <!-- property grid -->
    <div class="w-[228px] ml-[3px] mt-[3px] h-[120px] border-t-2 border-l border-[#888] bg-white pt-[2px]">
      <div class="grid grid-cols-[110px_1fr] h-[16.500px]"><span class="bg-[#d8d8d8] pl-[2px] leading-[15px]">Color</span><span class="bg-black ml-[4px] mr-[3px] h-[14px]"></span></div>
      <div class="grid grid-cols-[110px_1fr] h-[16.500px]"><span class="bg-[#d8d8d8] pl-[2px] leading-[15px]">Speed(mm/s)</span><span class="pl-[4px] leading-[16px] border-b border-[#eee]">100.00</span></div>
      <div class="grid grid-cols-[110px_1fr] h-[16.500px]"><span class="bg-[#d8d8d8] pl-[2px] leading-[15px]">MinPower(%)-1</span><span class="pl-[4px] leading-[16px] border-b border-[#eee]">30.0</span></div>
      <div class="grid grid-cols-[110px_1fr] h-[16.500px]"><span class="bg-[#d8d8d8] pl-[2px] leading-[15px]">MaxPower(%)-1</span><span class="pl-[4px] leading-[16px] border-b border-[#eee]">30.0</span></div>
      <div class="grid grid-cols-[110px_1fr] h-[16.500px]"><span class="bg-[#d8d8d8] pl-[2px] leading-[15px]">Priority</span><span class="pl-[4px] leading-[16px] border-b border-[#eee]">1</span></div>
    </div>
    <!-- laser tabs -->
    <div class="flex h-[17px] ml-[5px] mt-[5px] leading-[15px] text-center">
      <span class="w-[32px] border-r border-b border-[#888]">Laser1</span>
      <span class="w-[36px] border-r-2 border-b border-[#777]">Laser2</span>
    </div>
    <!-- line/column -->
    <div class="relative w-[227px] h-[76px] ml-[4px] mt-[9px] border border-[#bbb] border-b-0">
      <span class="absolute -top-[6px] left-[4px] bg-[#f0f0f0] px-[1px] whitespace-nowrap">Line/column setup</span>
      <div class="grid grid-cols-[18px_30px_41px_41px_44px_1fr] mt-[7px] text-center text-[9px] h-[12px] whitespace-nowrap">
        <span></span><span class="pl-[3px]">Num</span><span>space1</span><span>space2</span><span>Dislocation</span><span>Mirror</span>
      </div>
      <div class="flex mt-[2px]">
        <div class="w-[172px] flex flex-col gap-[2px] pl-[5px]">
          <div class="flex items-end gap-[3px] h-[15px] text-[#888]"><span class="w-[10px] text-[#444]">X:</span><span class="w-[27px] h-[15px] border-t border-l border-[#888] pl-[4px] leading-[14px]">1</span><span class="w-[38px] h-[15px] border-t border-l border-[#888] pl-[4px] leading-[14px]">0.000</span><span class="w-[38px] h-[15px] border-t border-l border-[#888] pl-[4px] leading-[14px]">0.000</span><span class="w-[38px] h-[15px] border-t border-l border-[#888] pl-[4px] leading-[14px]">0.000</span></div>
          <div class="flex items-end gap-[3px] h-[15px] text-[#888]"><span class="w-[10px] text-[#444]">Y:</span><span class="w-[27px] h-[15px] border-t border-l border-[#888] pl-[4px] leading-[14px]">1</span><span class="w-[38px] h-[15px] border-t border-l border-[#888] pl-[4px] leading-[14px]">0.000</span><span class="w-[38px] h-[15px] border-t border-l border-[#888] pl-[4px] leading-[14px]">0.000</span><span class="w-[38px] h-[15px] border-t border-l border-[#888] pl-[4px] leading-[14px]">0.000</span></div>
        </div>
        <div class="w-[52px] h-[34px] border border-[#999] text-[#bbb] text-[8px] flex flex-col justify-around pl-[2px]">
          <div class="flex items-center gap-[3px]"><i class="w-[9px] h-[9px] border-t border-l border-[#777]"></i>H<i class="w-[9px] h-[9px] border-t border-l border-[#777] ml-[2px]"></i>V</div>
          <div class="flex items-center gap-[3px]"><i class="w-[9px] h-[9px] border-t border-l border-[#777]"></i>H<i class="w-[9px] h-[9px] border-t border-l border-[#777] ml-[2px]"></i>V</div>
        </div>
      </div>
    </div>
    <div class="flex ml-[6px] -mt-[21px] h-[21px] relative text-[#aaa] text-center leading-[21px]">
      <div class="w-[24px] border-2 border-[#444] bg-[#f4f4f4] flex items-center justify-center"><svg class="w-[16px] h-[14px]" viewBox="0 0 16 14"><path d="M1 1v12M1 1h14" fill="none" stroke="#224"/><path d="M5 4h3v3H5zM10 4h3v3h-3zM5 9h3v3H5zM10 9h3v3h-3z" fill="#2a7a60"/></svg></div>
      <span class="w-[65px] ml-[4px] mt-[3px] h-[18px] border-r-2 border-[#777]">Virtual array</span>
      <span class="w-[61px] ml-[4px] mt-[3px] h-[18px] border-r-2 border-[#777]">Bestrew...</span>
      <span class="w-[57px] ml-[6px] mt-[3px] h-[18px] border-r-2 border-[#777]">Nesting</span>
    </div>
    <div class="h-px bg-[#ccc] mt-[2px]"></div>

    <!-- panel 2 -->
    <div class="flex items-center h-[6px] pr-[4px] pl-[1px] mt-[5px]">
      <div class="flex-1 h-[3px] border-y border-[#c4c4c4]"></div>
      <svg class="w-[7px] h-[7px] ml-[3px]" viewBox="0 0 7 7"><path d="M1 1l5 5M6 1L1 6" stroke="#222" stroke-width="1.500"/></svg>
    </div>
    <div class="relative w-[231px] h-[121px] mt-[8px] border border-[#c4c4c4] pl-[7px] pt-[9px]">
      <span class="absolute -top-[6px] left-[6px] bg-[#f0f0f0] px-[1px]">Laser work</span>
      <div class="grid grid-cols-[78px_84px_60px] gap-y-[2px] text-center leading-[16px] h-[38px] text-[9.600px]">
        <span class="h-[18px] border-r-2 border-b-2 border-[#888] mr-[2px]">Start</span><span class="h-[18px] border-r-2 border-b-2 border-[#888] mr-[2px]">Pause/Continue</span><span class="h-[18px] border-r-2 border-b-2 border-[#888]">Stop</span>
        <span class="h-[18px] border-r-2 border-b-2 border-[#888] mr-[2px]">SaveToUFile</span><span class="h-[18px] border-r-2 border-b-2 border-[#888] mr-[2px]">UFileOutput</span><span class="h-[18px] border-r-2 border-b-2 border-[#888]">Download</span>
      </div>
      <div class="flex mt-[2px] items-end h-[18px]">
        <span class="w-[76px] text-right -mb-[1px]">Position:</span>
        <div class="w-[143px] h-[17px] ml-[3px] bg-white border-t border-l border-[#888] flex items-center pl-[2px]"><span>Current position</span><svg class="w-[7px] h-[4px] ml-auto mr-[3px]" viewBox="0 0 7 4"><path d="M0 0h7L3.500 4z" fill="#222"/></svg></div>
      </div>
      <div class="flex mt-[9px]">
        <div class="w-[162px] flex flex-col">
          <div class="flex items-center h-[13px] gap-[5px]"><span class="w-[9px] h-[9px] bg-white border-t border-l border-[#666] flex items-center justify-center"><svg class="w-[8px] h-[8px]" viewBox="0 0 8 8"><path d="M1 4l2 2 4-5" fill="none" stroke="#111" stroke-width="1.400"/></svg></span>Path optimize</div>
          <div class="flex items-center h-[13px] gap-[5px]"><span class="w-[9px] h-[9px] bg-white border-t border-l border-[#666]"></span>Output select graphics</div>
          <div class="flex items-center h-[15px] gap-[5px] pl-[14px] text-[#aaa] pt-[2px]"><span class="w-[9px] h-[9px] border-t border-l border-[#888]"></span>Selected graphics position</div>
        </div>
        <div class="w-[60px] mt-[2px] flex flex-col gap-[3px] text-center leading-[16px] text-[9.600px]">
          <span class="h-[18px] border-r-2 border-b-2 border-[#888]">Cut scale</span>
          <span class="h-[18px] border-r-2 border-b-2 border-[#888]">Go scale</span>
        </div>
      </div>
    </div>
    <div class="relative w-[231px] h-[34px] mt-[9px] border border-[#c4c4c4] flex items-center pl-[6px]">
      <span class="absolute -top-[6px] left-[6px] bg-[#f0f0f0] px-[1px]">Device</span>
      <span class="w-[77px] h-[19px] mt-[5px] border-r-2 border-b-2 border-[#888] text-center leading-[16px] text-[9.600px]">Setting</span>
      <div class="w-[143px] h-[17px] ml-[4px] mt-[6px] bg-white border-t border-l border-[#888] flex items-center pl-[2px]"><span>Device---(USB:Auto)</span><svg class="w-[7px] h-[4px] ml-auto mr-[3px]" viewBox="0 0 7 4"><path d="M0 0h7L3.500 4z" fill="#222"/></svg></div>
    </div>
    <div class="h-px bg-[#ccc] mt-[10px]"></div>
  </div>
</div>

<!-- status bar -->
<div class="h-[15px] shrink-0 flex text-[9.300px] leading-[14px] text-[#444] border-t border-[#ccc]">
  <span class="w-[1082px] shrink-0 pl-[252px] whitespace-nowrap overflow-hidden border-r border-[#ccc]">the display area 1024*768 or higher *---</span>
  <span class="w-[18px] border-r border-[#ccc]"></span>
  <span class="w-[12px] border-r border-[#ccc]"></span>
  <span class="w-[6px] border-r border-[#ccc]"></span>
  <span class="flex-1 pl-[2px] whitespace-nowrap text-[9.500px]">X:-133.170mm,Y:806.465mm</span>
</div>

<!-- taskbar -->
<div class="h-[25px] shrink-0 bg-[#101010] flex items-center justify-end pr-[12px] text-[#ddd] text-[10px]">
  <div class="w-[26px] flex justify-center"><svg class="w-[12px] h-[7px]" viewBox="0 0 12 7"><path d="M1 6l5-5 5 5" fill="none" stroke="#ddd"/></svg></div>
  <div class="w-[26px] flex justify-center"><svg class="w-[12px] h-[15px]" viewBox="0 0 12 15"><path d="M3 1h6v9H3z" fill="#eee"/><path d="M1 9c0 3 10 3 10 0M6 12v2M3 14.500h6" fill="none" stroke="#ddd"/></svg></div>
  <div class="w-[28px] flex justify-center"><svg class="w-[15px] h-[10px]" viewBox="0 0 15 10"><path d="M1 2h13v7H1z" fill="#ddd" stroke="#ddd"/><path d="M3 0v2" stroke="#ddd"/></svg></div>
  <div class="w-[26px] flex justify-center"><svg class="w-[15px] h-[13px]" viewBox="0 0 15 13"><path d="M3 1.500h11v8H3zM9 9.500v3M6 12.500h6" fill="none" stroke="#ddd"/><path d="M0 0h4v3H0z" fill="#ddd"/></svg></div>
  <div class="w-[26px] flex justify-center"><svg class="w-[14px] h-[10px]" viewBox="0 0 14 10"><path d="M1 3h2l3-2.500v9L3 7H1zM9 3l4 4M13 3L9 7" fill="none" stroke="#ddd"/></svg></div>
  <div class="w-[28px] flex justify-center"><svg class="w-[14px] h-[15px]" viewBox="0 0 14 15"><path d="M1 14l3-5 5-7 3 2-6 8zM7 1l5 5" fill="none" stroke="#ddd"/></svg></div>
  <div class="w-[30px] text-center">ENG</div>
  <div class="w-[34px] text-center">11:22</div>
  <div class="w-[32px] flex justify-center"><svg class="w-[15px] h-[14px]" viewBox="0 0 15 14"><path d="M0 0h15v11H9l-1.500 3L6 11H0z" fill="#eee"/><path d="M3 3h9M3 5.500h9M3 8h6" stroke="#101010"/></svg></div>
</div>

<!-- stray window snapshot lying over the bottom-left corner -->
<div class="absolute left-0 top-[560px] w-[260px] h-[156px] bg-[#f0f0f0] border-t border-r border-[#bbb] flex flex-col">
  <div class="h-[66px] shrink-0 flex pt-[4px]">
    <div class="w-[50px] h-[61px] border-r-2 border-b-2 border-[#aaa]"></div>
    <svg class="w-[32px] h-[62px]" viewBox="0 0 32 62" font-family="Liberation Sans">
      <rect width="32" height="62" fill="#f8f6f0"/>
      <text transform="translate(22,22) rotate(-90)" font-size="21" font-weight="700" fill="#333" textLength="22">80</text>
      <path d="M0 22h26M26 7h4M26 34h4M26 46h4M26 58h4" stroke="#222"/>
    </svg>
    <div class="flex-1 flex flex-col border-l-2 border-[#222]">
      <div class="h-[31px] bg-white border-b-2 border-[#222]"></div>
      <div class="flex-1 flex items-center pl-[8px] pb-[1px]"><svg class="w-[9px] h-[13px]" viewBox="0 0 9 13"><path d="M8 1L2 6.500 8 12" fill="none" stroke="#666" stroke-width="2.400"/></svg></div>
    </div>
  </div>
  <div class="h-[47px] shrink-0 flex items-center pl-[2px] pt-[10px]">
    <svg class="w-[11px] h-[9px] mb-[22px]" viewBox="0 0 11 9"><path d="M1 .5l9 8M10 .5l-9 8" stroke="#222" stroke-width="2"/></svg>
    <div class="flex ml-[18px]">
      <i class="w-[38px] h-[41px] bg-black mr-[4px] border border-[#999]"></i>
      <i class="w-[38px] h-[41px] bg-[#0000f0] mr-[5px] border border-[#aaa]"></i>
      <i class="w-[38px] h-[41px] bg-[#e80000] mr-[3px] border-t-[5px] border-l-[5px] border-black"></i>
      <i class="w-[40px] h-[41px] bg-[#18fc00] mr-[4px] border border-[#aaa]"></i>
      <i class="w-[39px] h-[41px] bg-[#ee7070] mr-[3px] border border-[#bbb]"></i>
      <i class="w-[17px] h-[41px] bg-[#f8f800]"></i>
    </div>
  </div>
  <div class="h-[3px] shrink-0 mt-[11px] bg-[#bbb]"></div>
  <div class="flex-1 flex items-center text-[18.500px] leading-[24px] text-[#555] whitespace-nowrap overflow-hidden pb-[1px]"><span class="w-[30px] shrink-0">---</span><span>*Welcome to use the Laser</span></div>
</div>
<!-- grip and mouse pointer on top -->
<svg class="absolute left-0 top-[658px] w-[24px] h-[42px]" viewBox="0 0 24 42"><path d="M6 2v14h5V2" fill="none" stroke="#ccc" stroke-width="2"/><path d="M5 15v22l5-6 6 7 3-2-5-7 7-1z" fill="#111" stroke="#fff" stroke-width=".8"/></svg>
</div>
</body>
</html>
